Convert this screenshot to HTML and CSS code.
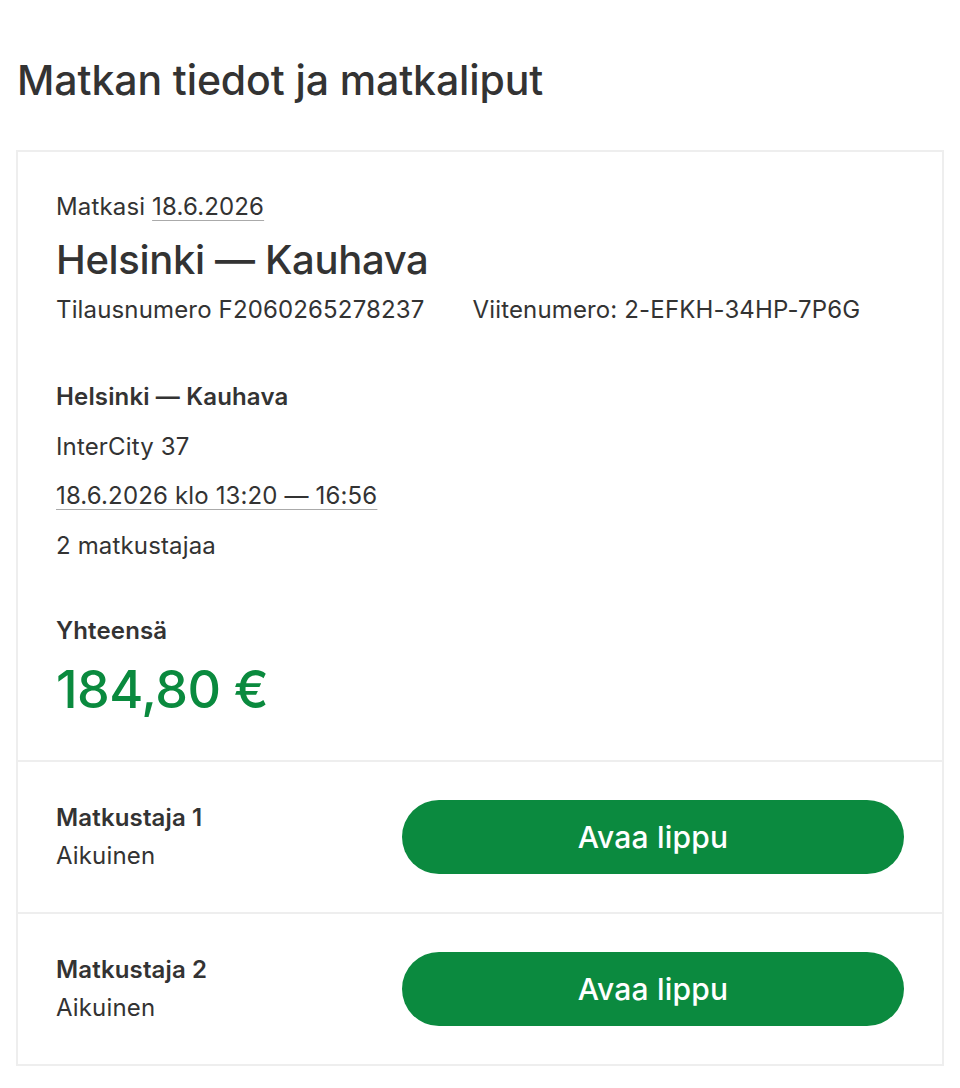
FILE: index.html
```html
<!DOCTYPE html>
<html lang="fi">
<head>
<meta charset="utf-8">
<title>Matkan tiedot ja matkaliput</title>
<link rel="stylesheet" href="styles.css">
</head>
<body>
<main class="page">
  <h1 class="page-title">Matkan tiedot ja matkaliput</h1>
  <section class="card">
    <div class="summary">
      <p class="trip-date">Matkasi <span class="ul">18.6.2026</span></p>
      <h2 class="trip-title">Helsinki — Kauhava</h2>
      <div class="refs">
        <span>Tilausnumero F2060265278237</span>
        <span>Viitenumero: 2-EFKH-34HP-7P6G</span>
      </div>
      <div class="leg">
        <p class="leg-route">Helsinki — Kauhava</p>
        <p>InterCity 37</p>
        <p><span class="ul">18.6.2026 klo 13:20 — 16:56</span></p>
        <p>2 matkustajaa</p>
      </div>
      <p class="total-label">Yhteensä</p>
      <p class="total">184,80 €</p>
    </div>
    <div class="passenger">
      <div class="p-info">
        <p class="p-name">Matkustaja 1</p>
        <p>Aikuinen</p>
      </div>
      <button class="btn">Avaa lippu</button>
    </div>
    <div class="passenger">
      <div class="p-info">
        <p class="p-name">Matkustaja 2</p>
        <p>Aikuinen</p>
      </div>
      <button class="btn">Avaa lippu</button>
    </div>
  </section>
</main>
</body>
</html>
```

FILE: styles.css
```css
* { box-sizing: border-box; }
html, body { margin: 0; padding: 0; background: #fff; }
body {
  font-family: Inter, "Noto Sans", "Liberation Sans", sans-serif;
  color: #333;
}
p { margin: 0; }
.page { padding: 54px 16px 0 16px; }
.page-title {
  margin: 0 0 0 1px;
  font-size: 41px;
  line-height: 52px;
  font-weight: 500;
  color: #333;
  letter-spacing: -0.1px;
}
.card {
  margin-top: 44px;
  width: 928px;
  border: 2px solid #eeeeee;
}
.summary {
  padding: 40px 38px 40px 38px;
  font-size: 24px;
  line-height: 30px;
  letter-spacing: 0.15px;
}
.ul {
  text-decoration: underline;
  text-decoration-color: #aaa;
  text-decoration-thickness: 1px;
  text-underline-offset: 5px;
}
.trip-title {
  margin: 14px 0 0 0;
  font-size: 40px;
  line-height: 48px;
  font-weight: 500;
  letter-spacing: -0.35px;
}
.refs {
  margin-top: 11px;
  display: flex;
  gap: 48px;
}
.leg { margin-top: 47px; }
.leg p { line-height: 49.5px; }
.leg-route { font-weight: 600; }
.total-label {
  margin-top: 46px;
  font-weight: 600;
}
.total {
  margin-top: 14px;
  font-size: 52px;
  line-height: 60px;
  font-weight: 500;
  color: #0a8a3e;
  letter-spacing: -0.5px;
}
.passenger {
  border-top: 2px solid #eeeeee;
  padding: 37px 38px 37px 38px;
  display: flex;
  align-items: center;
  justify-content: space-between;
  font-size: 24px;
  line-height: 38px;
  letter-spacing: 0.15px;
}
.p-name { font-weight: 600; }
.btn {
  width: 502px;
  height: 74px;
  border: none;
  border-radius: 37px;
  background: #0b8a3f;
  color: #fff;
  font-family: inherit;
  font-size: 30px;
  font-weight: 500;
  letter-spacing: 0.2px;
  cursor: pointer;
}
```
